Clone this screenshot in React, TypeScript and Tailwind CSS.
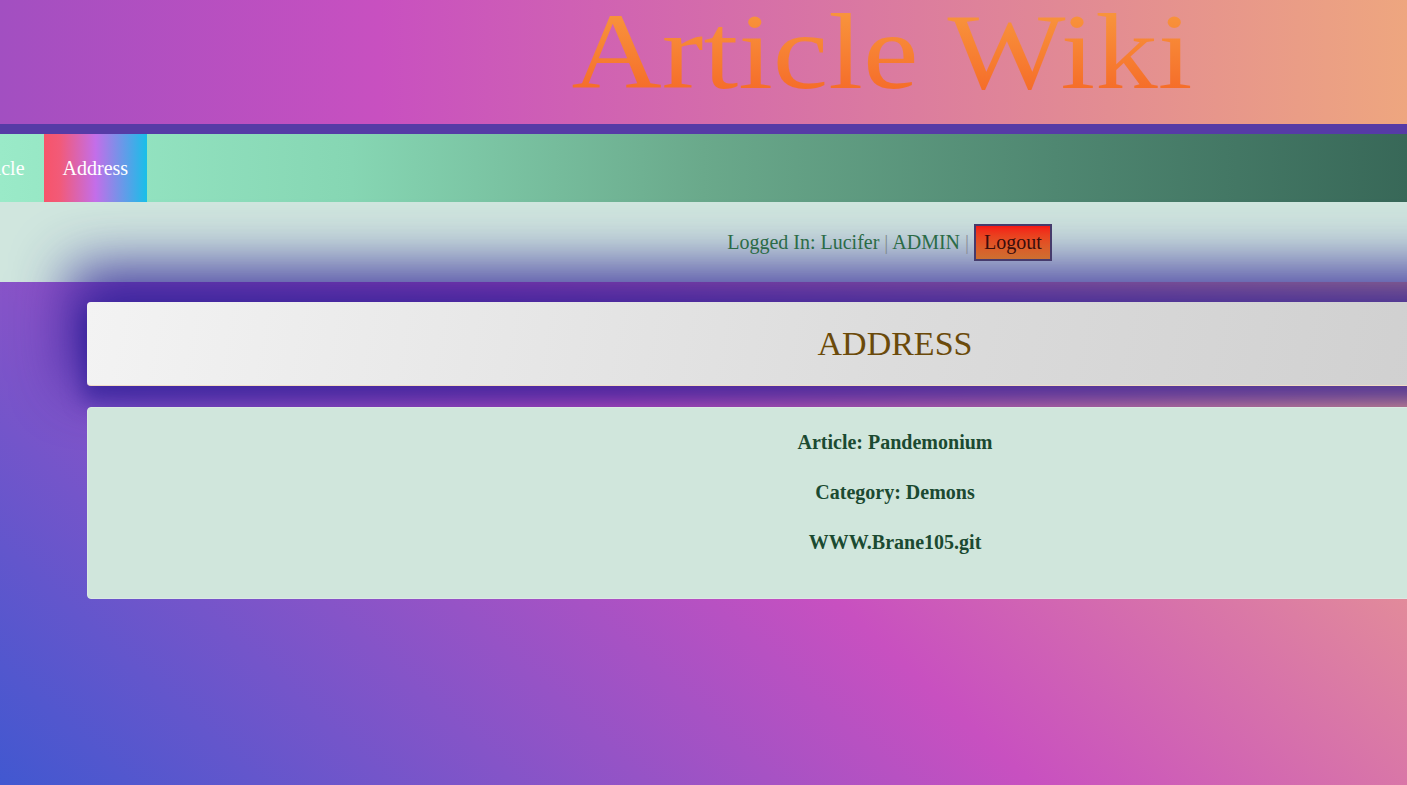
export default function App() {
  return (
    <div className="min-h-screen w-full overflow-hidden bg-[linear-gradient(43deg,#4158D0_0%,#C850C0_46%,#FFCC70_100%)] font-['Liberation_Serif',serif]">
      <header className="h-[134px] w-full border-b-[10px] border-[#563ba6] bg-[linear-gradient(90deg,#a24fc1_0%,#c850c0_27%,#eea67f_100%)]">
        <div className="flex w-[1764px] justify-center">
          <h1 className="origin-[center_60%] scale-y-[0.866] bg-gradient-to-b from-[#f8963d] to-[#f56a28] bg-clip-text text-[125px] leading-[100px] text-transparent">
            Article Wiki
          </h1>
        </div>
      </header>

      <nav className="flex h-[68px] w-full items-stretch bg-[linear-gradient(90deg,#9aeac8_0%,#86d6b3_25%,#6aa98b_50%,#4f8771_75%,#386858_100%)]">
        <div className="-ml-[50px] flex items-stretch">
          <a className="flex items-center px-[19px] text-[20px] text-white">Article</a>
          <a className="flex items-center bg-[linear-gradient(90deg,#f7546a_0%,#f25a78_15%,#c36ee9_50%,#18bfe8_100%)] px-[19px] text-[20px] text-white">
            Address
          </a>
        </div>
      </nav>

      <div className="h-[80px] w-full bg-[#d0e6de]">
        <div className="flex h-full w-[1779px] items-center justify-center">
          <span className="text-[20px] text-[#2b6b46]">
            Logged In: Lucifer <span className="text-[#7f8a8a]">|</span> ADMIN{" "}
            <span className="text-[#8a8f98]">|</span>{" "}
          </span>
          <button className="ml-[5px] border-2 border-[#463b6c] bg-gradient-to-b from-[#f51515] to-[#cc6f31] px-[8px] py-[4px] text-[20px] leading-[25px] text-[#3a0c0c]">
            Logout
          </button>
        </div>
      </div>

      <main className="w-[1790px] px-[87px] pt-[20px]">
        <section className="flex h-[84px] items-center justify-center rounded-[4px] border-b border-[#f2dcc4] bg-[linear-gradient(100deg,#f3f3f3_0%,#dcdcdc_50%,#cacaca_100%)] shadow-[0_-18px_55px_18px_rgba(45,30,150,0.85),0_12px_20px_4px_rgba(45,30,150,0.6)]">
          <h2 className="text-[34px] text-[#6b4a0a]">ADDRESS</h2>
        </section>

        <section className="mt-[21px] flex flex-col items-center gap-[27px] rounded-[4px] border border-[#dbe9e3] bg-[#d0e6dc] pb-[44px] pt-[23px]">
          <h4 className="text-[20px] font-bold leading-[23px] text-[#1b4a31]">Article: Pandemonium</h4>
          <h4 className="text-[20px] font-bold leading-[23px] text-[#1b4a31]">Category: Demons</h4>
          <h4 className="text-[20px] font-bold leading-[23px] text-[#1b4a31]">WWW.Brane105.git</h4>
        </section>
      </main>
    </div>
  );
}
